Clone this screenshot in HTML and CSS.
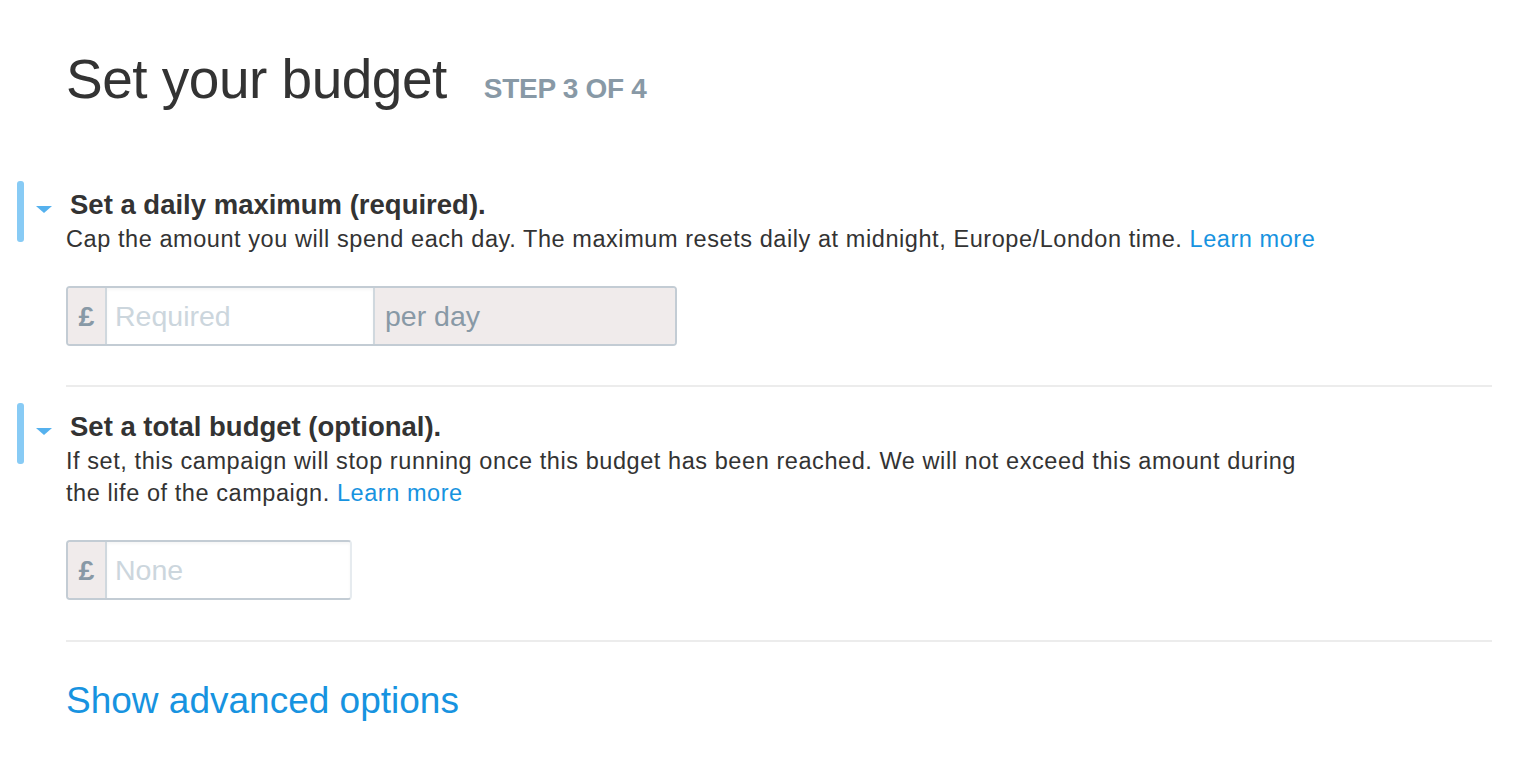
FILE: index.html
```html
<!DOCTYPE html>
<html>
<head>
<meta charset="utf-8">
<link rel="stylesheet" href="styles.css">
</head>
<body>
<div class="page">
  <div class="title-row">
    <h1 class="title">Set your budget</h1>
    <span class="step">STEP 3 OF 4</span>
  </div>

  <section class="section first">
    <div class="bar"></div>
    <div class="head">
      <span class="caret"></span>
      <h2 class="heading">Set a daily maximum (required).</h2>
    </div>
    <p class="desc">Cap the amount you will spend each day. The maximum resets daily at midnight, Europe/London time. <a class="link">Learn more</a></p>
    <div class="field daily">
      <span class="addon cur">£</span>
      <span class="input ph">Required</span>
      <span class="addon suffix">per day</span>
    </div>
  </section>

  <hr class="divider">

  <section class="section">
    <div class="bar"></div>
    <div class="head">
      <span class="caret"></span>
      <h2 class="heading">Set a total budget (optional).</h2>
    </div>
    <p class="desc narrow">If set, this campaign will stop running once this budget has been reached. We will not exceed this amount during the life of the campaign. <a class="link">Learn more</a></p>
    <div class="field total">
      <span class="addon cur">£</span>
      <span class="input ph">None</span>
    </div>
  </section>

  <hr class="divider last">

  <a class="advanced">Show advanced options</a>
</div>
</body>
</html>
```

FILE: styles.css
```css
* { box-sizing: border-box; }
html, body { margin: 0; padding: 0; background: #fff; }
body {
  font-family: "Liberation Sans", Arial, sans-serif;
  color: #333;
}
.page {
  padding: 46px 22px 0 66px;
}
.title-row {
  display: flex;
  align-items: baseline;
  gap: 37px;
}
.title {
  margin: 0;
  font-size: 55px;
  font-weight: 300;
  line-height: 66px;
  color: #333;
  letter-spacing: -0.5px;
}
.step {
  font-size: 28px;
  font-weight: bold;
  color: #8899a6;
  letter-spacing: -0.3px;
}
.section {
  position: relative;
}
.section.first { margin-top: 69px; }
.bar {
  position: absolute;
  left: -49px;
  top: 0;
  width: 7px;
  height: 61px;
  border-radius: 3px;
  background: #88cbf5;
}
.head {
  display: flex;
  align-items: center;
  height: 42px;
  margin-left: -30px;
}
.caret {
  width: 0; height: 0;
  border-left: 8px solid transparent;
  border-right: 8px solid transparent;
  border-top: 7px solid #55b1ee;
  margin-top: 15px;
  margin-right: 18px;
}
.heading {
  margin: 6px 0 0 0;
  font-size: 27.5px;
  font-weight: bold;
  color: #333;
}
.desc {
  margin: 0;
  font-size: 23.5px;
  letter-spacing: 0.57px;
  line-height: 32px;
  color: #333;
}
.desc.narrow { max-width: 1268px; }
.link { color: #1793e0; }
.field {
  display: flex;
  height: 60px;
  margin-top: 31px;
  border: 2px solid #c3ccd4;
  border-radius: 4px;
  overflow: hidden;
}
.field.daily { width: 611px; }
.field.total { width: 286px; border-right-color: #e6ebef; }
.addon {
  display: flex;
  align-items: center;
  background: #f0ebeb;
  color: #8899a6;
  font-size: 28.5px;
}
.addon.cur {
  width: 39px;
  justify-content: center;
  font-weight: bold;
  border-right: 2px solid #d0d8de;
}
.addon.suffix {
  flex: 1;
  padding-left: 10px;
  border-left: 2px solid #d0d8de;
}
.input {
  display: flex;
  align-items: center;
  background: #fff;
  padding-left: 8px;
  font-size: 28.5px;
  color: #ccd6dd;
  box-shadow: inset 0 2px 3px rgba(0,0,0,0.04);
}
.daily .input { width: 266px; }
.total .input { flex: 1; }
.divider {
  border: 0;
  border-top: 2px solid #ececec;
  margin: 39px 0 16px 0;
}
.divider.last { margin-top: 40px; }
.advanced {
  display: block;
  margin-top: 38px;
  font-size: 37px;
  color: #1793e0;
}
```
